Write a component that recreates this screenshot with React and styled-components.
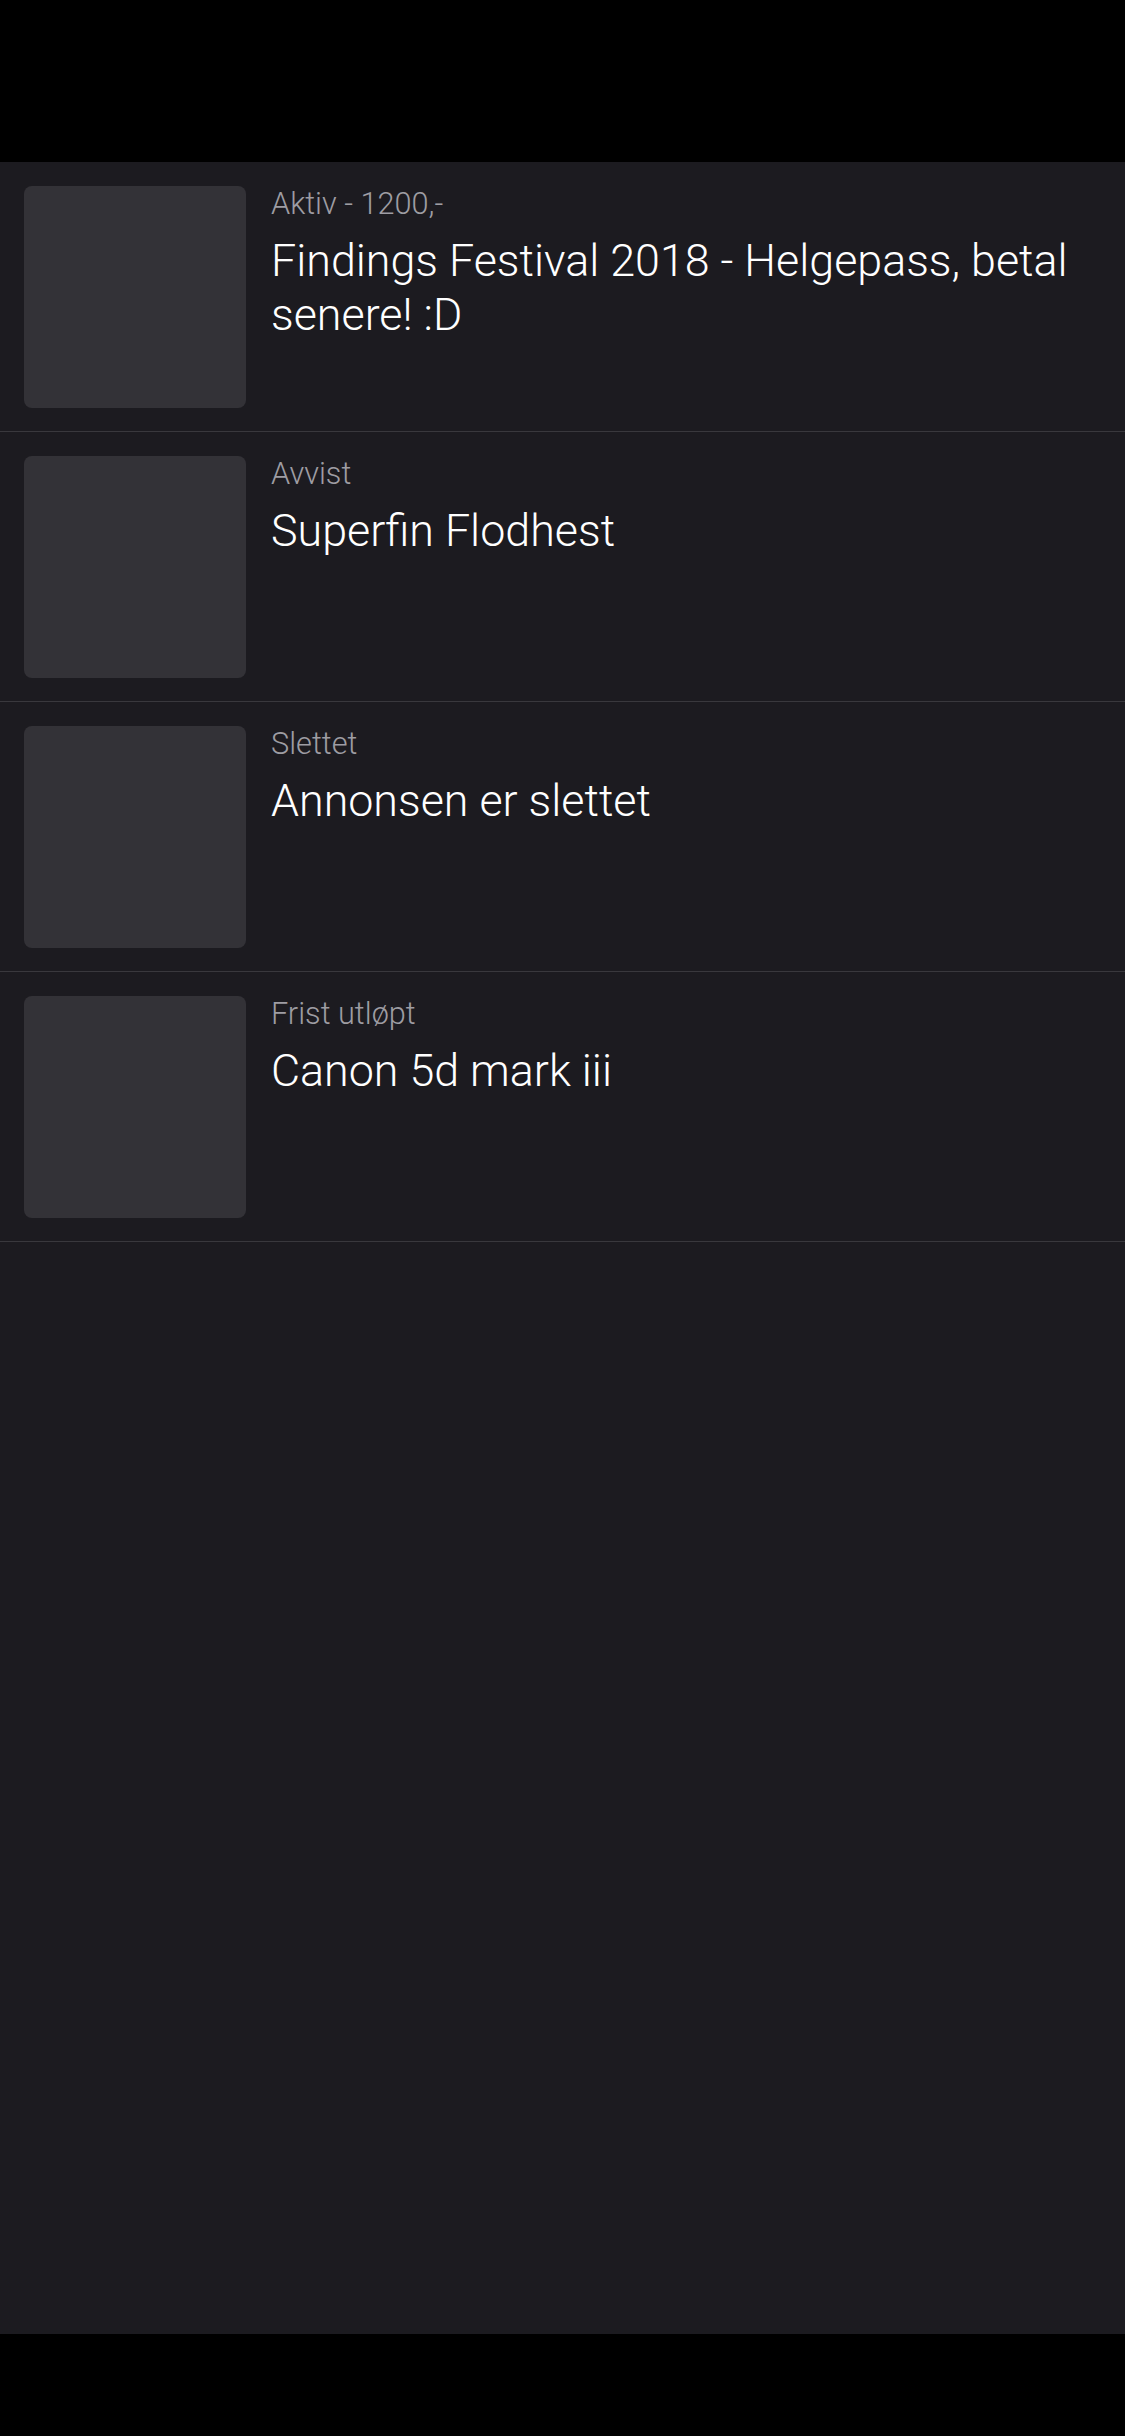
import React from "react";
import styled, { createGlobalStyle } from "styled-components";

const Global = createGlobalStyle`
  html, body { margin: 0; padding: 0; background: #000; }
  body { font-family: Roboto, "Liberation Sans", sans-serif; -webkit-font-smoothing: antialiased; }
`;

const Screen = styled.div`
  width: 1125px;
  height: 2436px;
  display: flex;
  flex-direction: column;
  background: #000;
`;

const StatusBar = styled.div`
  height: 162px;
  flex: none;
  background: #000;
`;

const HomeBar = styled.div`
  height: 102px;
  flex: none;
  background: #000;
`;

const Content = styled.main`
  flex: 1;
  background: #1c1b20;
  display: flex;
  flex-direction: column;
`;

const Row = styled.div`
  display: flex;
  gap: 25px;
  padding: 24px 24px 23px 24px;
  border-bottom: 1px solid #39383d;
`;

const Thumb = styled.div`
  width: 222px;
  height: 222px;
  flex: none;
  border-radius: 8px;
  background: #333237;
`;

const Info = styled.div`
  display: flex;
  flex-direction: column;
  min-width: 0;
  flex: 1;
`;

const Status = styled.div`
  font-size: 30.7px;
  line-height: 36px;
  font-weight: 300;
  color: #9e9da3;
`;

const Title = styled.div`
  font-size: 44.8px;
  line-height: 54px;
  font-weight: 300;
  color: #ffffff;
  margin-top: 12px;
  padding-right: 20px;
`;

const ads = [
  { status: "Aktiv - 1200,-", title: "Findings Festival 2018 - Helgepass, betal senere! :D" },
  { status: "Avvist", title: "Superfin Flodhest" },
  { status: "Slettet", title: "Annonsen er slettet" },
  { status: "Frist utløpt", title: "Canon 5d mark iii" },
];

export default function App() {
  return (
    <>
      <Global />
      <Screen>
        <StatusBar />
        <Content>
          {ads.map((a) => (
            <Row key={a.title}>
              <Thumb />
              <Info>
                <Status>{a.status}</Status>
                <Title>{a.title}</Title>
              </Info>
            </Row>
          ))}
        </Content>
        <HomeBar />
      </Screen>
    </>
  );
}
